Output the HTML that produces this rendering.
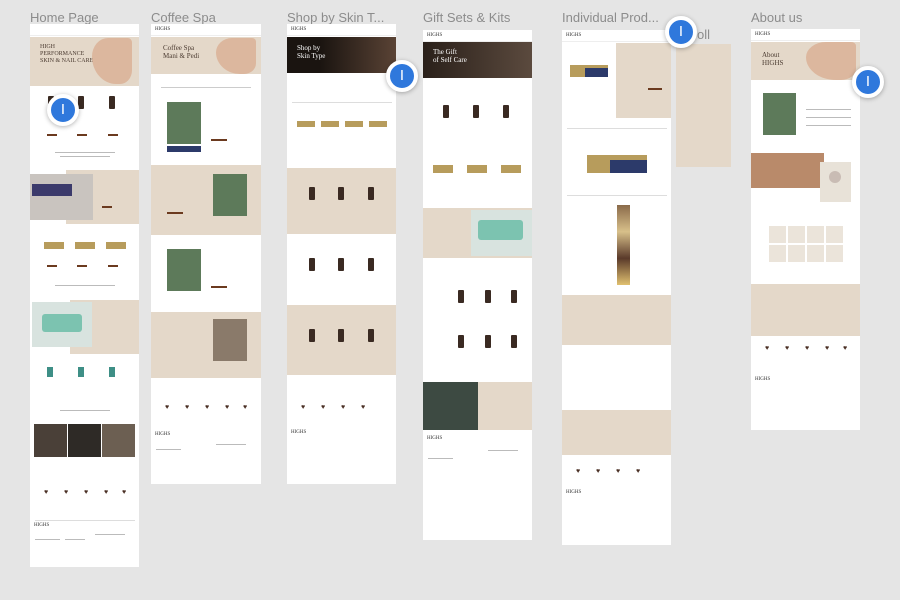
<!DOCTYPE html>
<html><head><meta charset="utf-8"><style>
*{margin:0;padding:0;box-sizing:border-box}
body{width:900px;height:600px;background:#e5e5e5;position:relative;overflow:hidden;font-family:"Liberation Sans",sans-serif}
.t{position:absolute;color:#8c8c8c;font-size:13px;top:10px;white-space:nowrap}
.f{position:absolute;background:#fff;overflow:hidden}
.s{position:absolute;left:0;right:0}
.b{background:#e4d8c9}
.d{background:#1e1813}
.nav{position:absolute;left:0;right:0;top:0;height:12px;background:#fff;border-bottom:1px solid #eee}
.logo{position:absolute;left:4px;top:3px;font-family:"Liberation Serif",serif;font-size:5px;color:#333}
.bot{position:absolute;width:6px;height:13px;background:#3a2a22;border-radius:1px}
.btn{position:absolute;width:10px;height:2px;background:#6b3a1f}
.g{position:absolute;background:#b79c5c}
.h{position:absolute;color:#4a2f24;font-size:7px}
.tx{position:absolute;height:1px;background:#bbb}
.img{position:absolute}
.m{position:absolute;width:32px;height:32px;border-radius:50%;background:#2f78dc;border:4px solid #fff;box-shadow:0 1px 5px rgba(0,0,0,.3);color:#fff;font-size:15px;text-align:center;line-height:24px}
.sv{position:absolute;font-family:"Liberation Serif",serif;color:#4a3a30}
</style></head><body>
<div class="t" style="left:30px">Home Page</div>
<div class="t" style="left:151px">Coffee Spa</div>
<div class="t" style="left:287px">Shop by Skin T...</div>
<div class="t" style="left:423px">Gift Sets &amp; Kits</div>
<div class="t" style="left:562px">Individual Prod...</div>
<div class="t" style="left:697px;top:27px">oll</div>
<div class="t" style="left:751px">About us</div>

<!-- Home -->
<div class="f" style="left:30px;top:24px;width:109px;height:543px">
<div class="nav"></div>
<div class="s b" style="top:13px;height:49px"></div>
<div class="sv" style="left:10px;top:20px;font-size:6px;line-height:7px">HIGH<br>PERFORMANCE<br>SKIN &amp; NAIL CARE</div>
<div class="img" style="left:62px;top:14px;width:40px;height:46px;background:#d9a98c;border-radius:40% 10% 30% 60%;opacity:.7"></div>
<div class="bot" style="left:18px;top:72px"></div><div class="bot" style="left:48px;top:72px"></div><div class="bot" style="left:79px;top:72px"></div>
<div class="btn" style="left:17px;top:110px"></div><div class="btn" style="left:47px;top:110px"></div><div class="btn" style="left:78px;top:110px"></div>
<div class="tx" style="left:25px;top:128px;width:60px"></div><div class="tx" style="left:30px;top:132px;width:50px"></div>
<div class="s b" style="top:146px;height:54px;left:36px"></div>
<div class="img" style="left:0;top:150px;width:63px;height:46px;background:#c9c4bf"></div>
<div class="img" style="left:2px;top:160px;width:40px;height:12px;background:#3b3a6b"></div>
<div class="btn" style="left:72px;top:182px"></div>
<div class="g" style="left:14px;top:218px;width:20px;height:7px"></div><div class="g" style="left:45px;top:218px;width:20px;height:7px"></div><div class="g" style="left:76px;top:218px;width:20px;height:7px"></div>
<div class="btn" style="left:17px;top:241px"></div><div class="btn" style="left:47px;top:241px"></div><div class="btn" style="left:78px;top:241px"></div>
<div class="tx" style="left:25px;top:261px;width:60px"></div>
<div class="s b" style="top:276px;height:54px;left:40px"></div>
<div class="img" style="left:2px;top:278px;width:60px;height:45px;background:#d8e3df"></div>
<div class="img" style="left:12px;top:290px;width:40px;height:18px;background:#7cc3b0;border-radius:3px"></div>
<div class="img" style="left:17px;top:343px;width:6px;height:10px;background:#3e8f86"></div><div class="img" style="left:48px;top:343px;width:6px;height:10px;background:#3e8f86"></div><div class="img" style="left:79px;top:343px;width:6px;height:10px;background:#3e8f86"></div>
<div class="tx" style="left:30px;top:386px;width:50px"></div>
<div class="img" style="left:4px;top:400px;width:33px;height:33px;background:#4a4038"></div>
<div class="img" style="left:38px;top:400px;width:33px;height:33px;background:#2e2a26"></div>
<div class="img" style="left:72px;top:400px;width:33px;height:33px;background:#6c5f52"></div>
<div class="h" style="left:14px;top:465px">♥</div><div class="h" style="left:34px;top:465px">♥</div><div class="h" style="left:54px;top:465px">♥</div><div class="h" style="left:74px;top:465px">♥</div><div class="h" style="left:92px;top:465px">♥</div>
<div class="tx" style="left:5px;top:496px;width:100px;background:#ddd"></div>
<div class="logo" style="top:499px">HIGHS</div>
<div class="tx" style="left:5px;top:515px;width:25px"></div><div class="tx" style="left:35px;top:515px;width:20px"></div><div class="tx" style="left:65px;top:510px;width:30px"></div>
</div>
<div class="m" style="left:47px;top:94px">I</div>

<!-- Coffee Spa -->
<div class="f" style="left:151px;top:24px;width:110px;height:460px">
<div class="nav"></div><div class="logo">HIGHS</div>
<div class="s b" style="top:13px;height:37px"></div>
<div class="sv" style="left:12px;top:20px;font-size:7px;line-height:8px">Coffee Spa<br>Mani &amp; Pedi</div>
<div class="img" style="left:65px;top:14px;width:40px;height:36px;background:#d9a98c;border-radius:40% 10% 30% 60%;opacity:.7"></div>
<div class="tx" style="left:10px;top:63px;width:90px;background:#ccc"></div>
<div class="img" style="left:16px;top:78px;width:34px;height:42px;background:#5d7a5a"></div>
<div class="img" style="left:16px;top:122px;width:34px;height:6px;background:#2c3a6a"></div>
<div class="btn" style="left:60px;top:115px;width:16px"></div>
<div class="s b" style="top:141px;height:70px"></div>
<div class="img" style="left:62px;top:150px;width:34px;height:42px;background:#5d7a5a"></div>
<div class="btn" style="left:16px;top:188px;width:16px"></div>
<div class="img" style="left:16px;top:225px;width:34px;height:42px;background:#5d7a5a"></div>
<div class="btn" style="left:60px;top:262px;width:16px"></div>
<div class="s b" style="top:288px;height:66px"></div>
<div class="img" style="left:62px;top:295px;width:34px;height:42px;background:#8a7a6a"></div>
<div class="h" style="left:14px;top:380px">♥</div><div class="h" style="left:34px;top:380px">♥</div><div class="h" style="left:54px;top:380px">♥</div><div class="h" style="left:74px;top:380px">♥</div><div class="h" style="left:92px;top:380px">♥</div>
<div class="logo" style="top:408px">HIGHS</div>
<div class="tx" style="left:5px;top:425px;width:25px"></div><div class="tx" style="left:65px;top:420px;width:30px"></div>
</div>

<!-- Shop by Skin -->
<div class="f" style="left:287px;top:24px;width:109px;height:460px">
<div class="nav"></div><div class="logo">HIGHS</div>
<div class="img" style="left:0;top:13px;width:109px;height:36px;background:linear-gradient(90deg,#1a1410 30%,#5a4335)"></div>
<div class="sv" style="left:10px;top:20px;font-size:7px;line-height:8px;color:#fff">Shop by<br>Skin Type</div>
<div class="tx" style="left:5px;top:78px;width:100px;background:#ddd"></div>
<div class="g" style="left:10px;top:97px;width:18px;height:6px"></div><div class="g" style="left:34px;top:97px;width:18px;height:6px"></div><div class="g" style="left:58px;top:97px;width:18px;height:6px"></div><div class="g" style="left:82px;top:97px;width:18px;height:6px"></div>
<div class="s b" style="top:144px;height:66px"></div>
<div class="bot" style="left:22px;top:163px"></div><div class="bot" style="left:51px;top:163px"></div><div class="bot" style="left:81px;top:163px"></div>
<div class="bot" style="left:22px;top:234px"></div><div class="bot" style="left:51px;top:234px"></div><div class="bot" style="left:81px;top:234px"></div>
<div class="s b" style="top:281px;height:70px"></div>
<div class="bot" style="left:22px;top:305px"></div><div class="bot" style="left:51px;top:305px"></div><div class="bot" style="left:81px;top:305px"></div>
<div class="h" style="left:14px;top:380px">♥</div><div class="h" style="left:34px;top:380px">♥</div><div class="h" style="left:54px;top:380px">♥</div><div class="h" style="left:74px;top:380px">♥</div>
<div class="logo" style="top:406px">HIGHS</div>
</div>
<div class="m" style="left:386px;top:60px">I</div>

<!-- Gift -->
<div class="f" style="left:423px;top:30px;width:109px;height:510px">
<div class="nav"></div><div class="logo">HIGHS</div>
<div class="img" style="left:0;top:12px;width:109px;height:36px;background:linear-gradient(90deg,#2a201a,#5b4a3e)"></div>
<div class="sv" style="left:10px;top:18px;font-size:7px;line-height:8px;color:#fff">The Gift<br>of Self Care</div>
<div class="bot" style="left:20px;top:75px"></div><div class="bot" style="left:50px;top:75px"></div><div class="bot" style="left:80px;top:75px"></div>
<div class="g" style="left:10px;top:135px;width:20px;height:8px"></div><div class="g" style="left:44px;top:135px;width:20px;height:8px"></div><div class="g" style="left:78px;top:135px;width:20px;height:8px"></div>
<div class="s b" style="top:178px;height:50px"></div>
<div class="img" style="left:48px;top:180px;width:61px;height:46px;background:#d8e3df"></div>
<div class="img" style="left:55px;top:190px;width:45px;height:20px;background:#7cc3b0;border-radius:3px"></div>
<div class="bot" style="left:35px;top:260px"></div><div class="bot" style="left:62px;top:260px"></div><div class="bot" style="left:88px;top:260px"></div>
<div class="bot" style="left:35px;top:305px"></div><div class="bot" style="left:62px;top:305px"></div><div class="bot" style="left:88px;top:305px"></div>
<div class="s b" style="top:352px;height:48px"></div>
<div class="img" style="left:0;top:352px;width:55px;height:48px;background:#3d4a42"></div>
<div class="logo" style="top:406px">HIGHS</div>
<div class="tx" style="left:5px;top:428px;width:25px"></div><div class="tx" style="left:65px;top:420px;width:30px"></div>
</div>

<!-- Individual -->
<div class="f" style="left:562px;top:30px;width:109px;height:515px">
<div class="nav"></div><div class="logo">HIGHS</div>
<div class="s b" style="top:13px;height:75px;left:54px"></div>
<div class="g" style="left:8px;top:35px;width:38px;height:12px"></div>
<div class="img" style="left:23px;top:38px;width:23px;height:9px;background:#2c3a6a"></div>
<div class="btn" style="left:86px;top:58px;width:14px"></div>
<div class="tx" style="left:5px;top:98px;width:100px;background:#ddd"></div>
<div class="g" style="left:25px;top:125px;width:60px;height:18px"></div>
<div class="img" style="left:48px;top:130px;width:37px;height:13px;background:#2c3a6a"></div>
<div class="tx" style="left:5px;top:165px;width:100px;background:#ddd"></div>
<div class="img" style="left:55px;top:175px;width:13px;height:80px;background:linear-gradient(#8a6a4a,#d8c08a,#5a3a2a,#e0c070)"></div>
<div class="s b" style="top:265px;height:50px"></div>
<div class="s b" style="top:380px;height:45px"></div>
<div class="h" style="left:14px;top:438px">♥</div><div class="h" style="left:34px;top:438px">♥</div><div class="h" style="left:54px;top:438px">♥</div><div class="h" style="left:74px;top:438px">♥</div>
<div class="logo" style="top:460px">HIGHS</div>
</div>
<div class="f b" style="left:676px;top:44px;width:55px;height:123px"></div>
<div class="m" style="left:665px;top:16px">I</div>

<!-- About -->
<div class="f" style="left:751px;top:29px;width:109px;height:401px">
<div class="nav"></div><div class="logo">HIGHS</div>
<div class="s b" style="top:13px;height:38px"></div>
<div class="sv" style="left:11px;top:22px;font-size:7px;line-height:8px">About<br>HIGHS</div>
<div class="img" style="left:55px;top:13px;width:50px;height:38px;background:#d9a98c;border-radius:40% 10% 30% 60%;opacity:.7"></div>
<div class="img" style="left:12px;top:64px;width:33px;height:42px;background:#5d7a5a"></div>
<div class="tx" style="left:55px;top:80px;width:45px"></div><div class="tx" style="left:55px;top:88px;width:45px"></div><div class="tx" style="left:55px;top:96px;width:45px"></div>
<div class="img" style="left:0;top:124px;width:73px;height:35px;background:#b98a6a"></div>
<div class="img" style="left:69px;top:133px;width:31px;height:40px;background:#e8e2d8"></div>
<div class="img" style="left:78px;top:142px;width:12px;height:12px;border-radius:50%;background:#c9bcb4"></div>
<div class="img" style="left:18px;top:197px;width:75px;height:36px;background:repeating-linear-gradient(90deg,#ebe4da 0 17px,#fff 17px 19px)"></div>
<div class="img" style="left:18px;top:214px;width:75px;height:2px;background:#fff"></div>
<div class="s b" style="top:255px;height:52px"></div>
<div class="h" style="left:14px;top:316px">♥</div><div class="h" style="left:34px;top:316px">♥</div><div class="h" style="left:54px;top:316px">♥</div><div class="h" style="left:74px;top:316px">♥</div><div class="h" style="left:92px;top:316px">♥</div>
<div class="logo" style="top:348px">HIGHS</div>
</div>
<div class="m" style="left:852px;top:66px">I</div>
</body></html>
